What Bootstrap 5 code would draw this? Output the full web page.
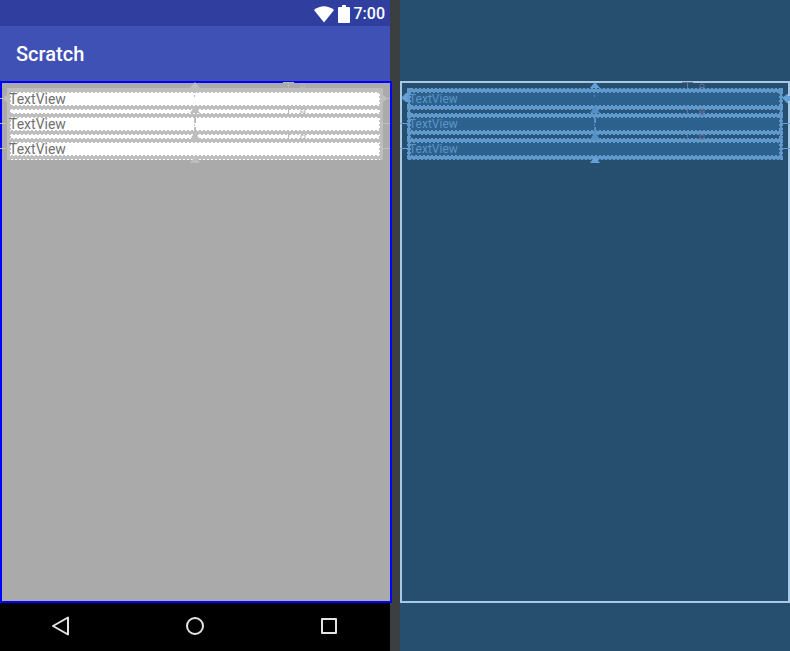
<!DOCTYPE html>
<html lang="en">
<head>
<meta charset="utf-8">
<meta name="viewport" content="width=device-width, initial-scale=1">
<title>Scratch layout</title>
<link href="https://cdn.jsdelivr.net/npm/bootstrap@5.3.0/dist/css/bootstrap.min.css" rel="stylesheet">
<style>
body { font-family: Roboto, "Liberation Sans", sans-serif; background: #3b3f41; }
.editor { gap: 10px; }
.pane { flex: 1 1 0; min-width: 0; }
.status { height: 26px; background: #303f9f; gap: 4px; padding: 2px 5px 0 0; font-size: 16px; line-height: 24px; font-weight: 500; }
.appbar { height: 55px; background: #3f51b5; padding: 0 16px; }
.appbar h1 { font-size: 20px; line-height: 24px; font-weight: 500; }
.surface { padding: 5px; border: 2px solid; }
.design .surface { background: #aaa; border-color: #00f; margin-right: -2px; --zig: #bebebe; --fill: #fff; --gap: #fff; --ink: #707070; --pin: #bebebe; --dim: #b8b8b8; }
.blueprint { background: #264e6e; padding: 81px 0 48px; }
.blueprint .surface { border-color: #a8c8e4; --zig: #6299cb; --fill: #2c618d; --gap: #28567d; --ink: #5b95ca; --pin: #65a1d8; --dim: #66759c; }
/* stacked views, with a serrated edge down each side */
.views { background: var(--fill); z-index: 0; border-radius: 3px; }
.views::before, .views::after { content: ""; position: absolute; z-index: -1; top: 0; bottom: 0; width: 4px; background: linear-gradient(var(--zig), var(--zig)) 1px 0 / 2px 100% no-repeat, repeating-linear-gradient(var(--zig) 0 2px, transparent 2px 4px); }
.views::before { left: 0; }
.views::after { right: 0; }
.design .views { margin-right: 2px; }
.design .views::before, .design .views::after { background: linear-gradient(var(--zig), var(--zig)) 0 0 / 3px 100% no-repeat, repeating-linear-gradient(var(--zig) 0 2px, transparent 2px 4px); }
.design .views::after { background-position: 1px 0, 0 0; }
.gap-row { height: 3px; margin: 0 4px; background: var(--gap); }
.saw { height: 5px; background: repeating-linear-gradient(90deg, var(--zig) 0 2px, transparent 2px 4px) 0 0 / 100% 1px no-repeat, linear-gradient(var(--zig), var(--zig)) 0 1px / 100% 3px no-repeat, repeating-linear-gradient(90deg, transparent 0 2px, var(--zig) 2px 4px) 0 4px / 100% 1px no-repeat; }
.design .saw.rim-top { background-position: 0 0, 0 0, 0 4px; background-size: 100% 1px, 100% 4px, 100% 1px; }
.label-row { height: 12px; line-height: 12px; font-size: 14px; color: var(--ink); white-space: nowrap; padding-left: 2px; }
.blueprint .label-row { font-size: 12px; }
.pins { position: absolute; z-index: 1; top: -2px; height: 84px; fill: var(--pin); stroke: none; overflow: visible; }
.pins-mid { left: 50%; width: 12px; margin-left: -6px; }
.design .pins-mid { margin-left: -7px; }
.pins-start { left: -2px; width: 12px; }
.pins-end { right: -2px; width: 12px; }
.design .pins-end { right: 0; }
.pins-dim { left: 72.5%; width: 28px; fill: none; stroke: var(--dim); }
.softkeys { height: 48px; padding: 0 49px 2px; background: #000; }
.softkeys button { width: 24px; height: 24px; padding: 0; border: 0; background: none; display: flex; }
</style>
<script src="https://cdn.jsdelivr.net/npm/bootstrap@5.3.0/dist/js/bootstrap.bundle.min.js"></script>
</head>
<body>
<main class="editor d-flex min-vh-100">
  <section class="pane design d-flex flex-column" aria-label="Design">
    <div class="status d-flex justify-content-end align-items-center text-white">
      <svg width="20" height="17" viewBox="0 0 20 17" fill="#fff" aria-hidden="true"><path d="M0 4Q10-3.500 20 4L10 16.500Z"/></svg>
      <svg width="12" height="18" viewBox="0 0 12 18" fill="#fff" aria-hidden="true"><path d="M4 0h4v2h3q1 0 1 1v14q0 1-1 1H1q-1 0-1-1V3q0-1 1-1h3z"/></svg>
      <span>7:00</span>
    </div>
    <header class="appbar d-flex align-items-center text-white"><h1 class="m-0">Scratch</h1></header>
    <div class="surface position-relative flex-grow-1">
      <div class="views position-relative">
        <div class="saw rim-top"></div><div class="label-row">TextView</div><div class="saw"></div>
        <div class="gap-row"></div>
        <div class="saw"></div><div class="label-row">TextView</div><div class="saw"></div>
        <div class="gap-row"></div>
        <div class="saw"></div><div class="label-row">TextView</div><div class="saw"></div>
      </div>
      <svg class="pins pins-mid" viewBox="0 0 12 84" aria-hidden="true"><path d="M6 1l5 6H1zM6 25l5 7H1zM6 50l5 9H1zM6 75l5 7H1zM5 7h2v5H5zM5 14h1v2H5zM5 36h2v6H5zM5 43h1v2H5zM5 46h2v8H5z"/></svg>
      <svg class="pins pins-start" viewBox="0 0 12 84" aria-hidden="true"><path d="M0 17h3l5-4v9l-5-4H0zM0 42h8v1H0zM0 67h8v1H0z"/></svg>
      <svg class="pins pins-end" viewBox="0 0 12 84" aria-hidden="true"><path d="M12 17H9L4 13v9l5-4h3zM4 42h8v1H4zM4 67h8v1H4z"/></svg>
      <svg class="pins pins-dim" viewBox="0 0 28 84" aria-hidden="true"><path d="M0 1.500h11M5.500 2v5M5.500 27v6M5.500 53v5M18 4.500q0-1.500 2-1.500t2 1.500v2h-4zM18 28h4v6h-4zM18 31h4M18 54h4v4h-4z"/></svg>
    </div>
    <nav class="softkeys d-flex justify-content-between align-items-center" aria-label="System">
      <button type="button" aria-label="Back"><svg width="24" height="24" fill="none" stroke="#e4e4e4" stroke-width="2" stroke-linejoin="round"><path d="M4 12L19 3.500v17z"/></svg></button>
      <button type="button" aria-label="Home"><svg width="24" height="24" fill="none" stroke="#e4e4e4" stroke-width="2"><circle cx="12" cy="12" r="8"/></svg></button>
      <button type="button" aria-label="Recent apps"><svg width="24" height="24" fill="none" stroke="#e4e4e4" stroke-width="2" stroke-linejoin="round"><path d="M5 5h14v14H5z"/></svg></button>
    </nav>
  </section>
  <section class="pane blueprint d-flex flex-column" aria-label="Blueprint">
    <div class="surface position-relative flex-grow-1">
      <div class="views position-relative">
        <div class="saw"></div><div class="label-row">TextView</div><div class="saw"></div>
        <div class="gap-row"></div>
        <div class="saw"></div><div class="label-row">TextView</div><div class="saw"></div>
        <div class="gap-row"></div>
        <div class="saw"></div><div class="label-row">TextView</div><div class="saw"></div>
      </div>
      <svg class="pins pins-mid" viewBox="0 0 12 84" aria-hidden="true"><path d="M6 1l5 6H1zM6 75l5 7H1z"/><path fill="#568fc4" d="M6 25l5 7H1zM6 50l5 9H1zM5 14h1v2H5zM5 36h2v6H5zM5 43h1v2H5zM5 46h2v8H5z"/></svg>
      <svg class="pins pins-start" viewBox="0 0 12 84" aria-hidden="true"><path d="M1 17l5-5h2v9H6zM0 42h8v1H0zM0 67h8v1H0z"/></svg>
      <svg class="pins pins-end" viewBox="0 0 12 84" aria-hidden="true"><path d="M4 17l5-4h1v2h2v5h-2v2H9zM4 42h8v1H4zM4 67h8v1H4z"/></svg>
      <svg class="pins pins-dim" viewBox="0 0 28 84" aria-hidden="true"><path d="M0 1.500h11M5.500 2v5M5.500 27v6M5.500 53v5M18 4.500q0-1.500 2-1.500t2 1.500v2h-4zM18 28h4v6h-4zM18 31h4M18 54h4v4h-4z"/></svg>
    </div>
  </section>
</main>
</body>
</html>
